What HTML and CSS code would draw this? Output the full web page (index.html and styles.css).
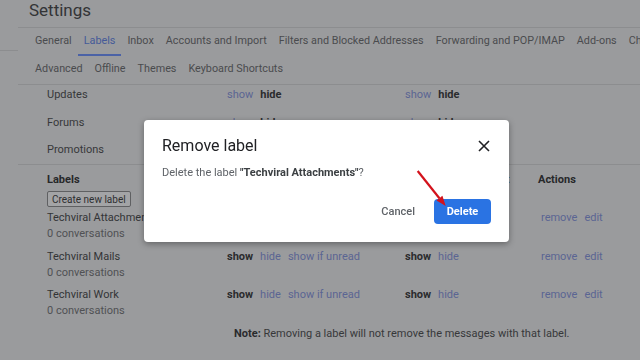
FILE: index.html
```html
<!DOCTYPE html>
<html lang="en">
<head>
    <meta charset="UTF-8">
    <meta name="viewport" content="width=device-width, initial-scale=1.0">
    <title>Settings - Labels</title>
    <link rel="stylesheet" href="styles.css">
</head>
<body>
    <div id="app">
        <aside class="rail"></aside>

        <main class="settings">
            <header class="settings-head">
                <h1>Settings</h1>
            </header>

            <nav class="tabs">
                <div class="tab-row">
                    <a class="tab">General</a>
                    <a class="tab active">Labels</a>
                    <a class="tab">Inbox</a>
                    <a class="tab">Accounts and Import</a>
                    <a class="tab">Filters and Blocked Addresses</a>
                    <a class="tab">Forwarding and POP/IMAP</a>
                    <a class="tab">Add-ons</a>
                    <a class="tab">Chat and Meet</a>
                </div>
                <div class="tab-row">
                    <a class="tab">Advanced</a>
                    <a class="tab">Offline</a>
                    <a class="tab">Themes</a>
                    <a class="tab">Keyboard Shortcuts</a>
                </div>
            </nav>

            <section class="categories">
                <div class="row">
                    <span class="name">Updates</span>
                    <span class="opts"><a>show</a><b>hide</b></span>
                    <span class="opts"><a>show</a><b>hide</b></span>
                </div>
                <div class="row">
                    <span class="name">Forums</span>
                    <span class="opts"><a>show</a><b>hide</b></span>
                    <span class="opts"><a>show</a><b>hide</b></span>
                </div>
                <div class="row">
                    <span class="name">Promotions</span>
                    <span class="opts"><a>show</a><b>hide</b></span>
                    <span class="opts"><a>show</a><b>hide</b></span>
                </div>
            </section>

            <section class="labels">
                <div class="row head">
                    <b class="name">Labels</b>
                    <b>Show in label list</b>
                    <b>Show in message list</b>
                    <b class="actions">Actions</b>
                </div>
                <button class="create">Create new label</button>

                <div class="row label">
                    <span class="name">Techviral Attachments<small>0 conversations</small></span>
                    <span class="opts"><b>show</b><a>hide</a><a>show if unread</a></span>
                    <span class="opts"><b>show</b><a>hide</a></span>
                    <span class="opts actions"><a>remove</a><a>edit</a></span>
                </div>
                <div class="row label">
                    <span class="name">Techviral Mails<small>0 conversations</small></span>
                    <span class="opts"><b>show</b><a>hide</a><a>show if unread</a></span>
                    <span class="opts"><b>show</b><a>hide</a></span>
                    <span class="opts actions"><a>remove</a><a>edit</a></span>
                </div>
                <div class="row label">
                    <span class="name">Techviral Work<small>0 conversations</small></span>
                    <span class="opts"><b>show</b><a>hide</a><a>show if unread</a></span>
                    <span class="opts"><b>show</b><a>hide</a></span>
                    <span class="opts actions"><a>remove</a><a>edit</a></span>
                </div>

                <p class="note"><b>Note:</b> Removing a label will not remove the messages with that label.</p>
            </section>
        </main>
    </div>

    <div id="backdrop">
        <div class="dialog">
            <div class="dialog-head">
                <h2>Remove label</h2>
                <button class="close" aria-label="Close">
                    <svg width="12" height="12" viewBox="0 0 12 12">
                        <path d="M1 1 L11 11 M11 1 L1 11" stroke="#202124" stroke-width="1.6" fill="none"/>
                    </svg>
                </button>
            </div>
            <p class="dialog-body">Delete the label <b>"Techviral Attachments"</b>?</p>
            <div class="dialog-actions">
                <button class="btn-text">Cancel</button>
                <button class="btn-primary">Delete</button>
            </div>
            <svg class="pointer" width="40" height="46" viewBox="0 0 40 46">
                <line x1="5.7" y1="5" x2="27.4" y2="32.2" stroke="#d3121c" stroke-width="2.2"/>
                <polygon points="33.7,40 24.5,34.6 30.4,29.8" fill="#d3121c"/>
            </svg>
        </div>
    </div>
</body>
</html>
```

FILE: styles.css
```css
* {
    margin: 0;
    padding: 0;
    box-sizing: border-box;
}

body {
    font-family: Roboto, 'Liberation Sans', Arial, sans-serif;
    font-size: 11px;
    background: #9a9b9d;
    color: #2f3032;
    overflow: hidden;
    width: 640px;
    height: 360px;
}

a {
    color: #5a6593;
}

b {
    font-weight: 700;
    color: #2a2b2d;
}

#app {
    display: flex;
    height: 100vh;
}

.rail {
    width: 18px;
    height: 51px;
    border-bottom: 1px solid #8c8d8f;
    flex-shrink: 0;
}

.settings {
    flex: 1;
    min-width: 0;
}

/* header */
.settings-head {
    height: 28px;
    padding-left: 11px;
    border-bottom: 1px solid #8c8d8f;
}

.settings-head h1 {
    font-size: 17px;
    font-weight: 400;
    line-height: 20px;
    color: #333436;
}

/* tabs */
.tabs {
    padding-left: 11px;
    border-bottom: 1px solid #8c8d8f;
}

.tab-row {
    display: flex;
    white-space: nowrap;
    height: 28px;
    overflow: hidden;
}

.tab {
    padding: 0 6px;
    height: 28px;
    line-height: 26px;
    border-bottom: 2px solid transparent;
    color: #4a4b4e;
    font-size: 10.8px;
}

.tab.active {
    color: #455a98;
    border-bottom-color: #4b62a6;
}

/* rows */
.row {
    display: grid;
    grid-template-columns: 180px 178px 133px auto;
    padding-left: 29px;
    line-height: 16px;
    white-space: nowrap;
}

.opts {
    display: flex;
    gap: 7px;
}

.categories {
    display: flex;
    flex-direction: column;
    gap: 11.5px;
    padding: 2px 0 6px;
    border-bottom: 1px solid #8c8d8f;
}

.categories .name {
    color: #37383a;
}

.labels {
    padding-top: 7px;
}

.labels .head b {
    color: #27282a;
}

.actions {
    padding-left: 3px;
}

.labels .head .actions {
    padding-left: 0;
}

.create {
    margin: 3px 0 3px 29px;
    display: block;
    height: 16px;
    padding: 0 4px;
    font-family: inherit;
    font-size: 10px;
    color: #2e2f31;
    background: #a3a4a6;
    border: 1px solid #5f6062;
    border-radius: 2px;
}

.row.label {
    height: 38.5px;
}

.label .name {
    display: flex;
    flex-direction: column;
    color: #333436;
}

.label small {
    font-size: 11px;
    color: #505154;
}

.note {
    margin-left: 216px;
    line-height: 16px;
    color: #37383a;
}

/* dialog */
#backdrop {
    position: fixed;
    inset: 0;
    display: flex;
    align-items: center;
    justify-content: center;
    padding: 2px 0 0 13px;
}

.dialog {
    position: relative;
    width: 365px;
    height: 122px;
    background: #fff;
    border-radius: 4px;
    box-shadow: 0 2px 6px rgba(0, 0, 0, 0.35);
    padding: 16px 18px 18px;
    display: flex;
    flex-direction: column;
}

.dialog-head {
    display: flex;
    justify-content: space-between;
    align-items: center;
    height: 20px;
}

.dialog-head h2 {
    font-size: 16px;
    font-weight: 400;
    color: #202124;
    line-height: 20px;
}

.close {
    border: none;
    background: none;
    width: 12px;
    height: 12px;
    margin-right: 1px;
}

.close svg {
    display: block;
}

.dialog-body {
    margin-top: 9px;
    line-height: 16px;
    color: #5f6368;
}

.dialog-body b {
    color: #3c4043;
}

.dialog-actions {
    margin-top: auto;
    display: flex;
    justify-content: flex-end;
    gap: 7px;
}

.dialog-actions button {
    height: 25px;
    padding: 0 12px;
    border: none;
    border-radius: 4px;
    font-family: inherit;
    font-size: 11px;
    font-weight: 500;
}

.btn-text {
    background: none;
    color: #5f6368;
}

.btn-primary {
    background: #2a73e3;
    color: #fff;
    font-weight: 700 !important;
    width: 57px;
}

.pointer {
    position: absolute;
    left: 268px;
    top: 46px;
}
```
